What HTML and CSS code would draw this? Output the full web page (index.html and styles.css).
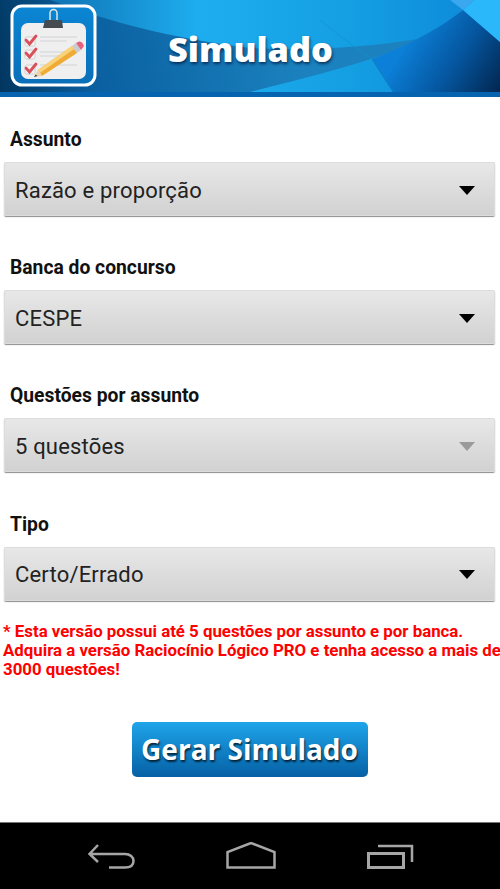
FILE: index.html
```html
<!DOCTYPE html>
<html lang="pt">
<head>
<meta charset="utf-8">
<title>Simulado</title>
<link rel="stylesheet" href="styles.css">
</head>
<body>
<div class="screen">
  <header class="header">
    <svg class="header-bg" width="500" height="97" viewBox="0 0 500 97" aria-hidden="true">
      <defs>
        <linearGradient id="base" x1="0" y1="0" x2="1" y2="0">
          <stop offset="0" stop-color="#0a5f9f"/>
          <stop offset=".4" stop-color="#1eaef0"/>
          <stop offset=".7" stop-color="#149fe2"/>
          <stop offset="1" stop-color="#0d86d8"/>
        </linearGradient>
        <linearGradient id="left" gradientUnits="userSpaceOnUse" x1="0" y1="90" x2="300" y2="40">
          <stop offset="0" stop-color="#02365f"/>
          <stop offset=".3" stop-color="#0a5f9f"/>
          <stop offset="1" stop-color="#1b82bf"/>
        </linearGradient>
        <linearGradient id="right" gradientUnits="userSpaceOnUse" x1="410" y1="35" x2="500" y2="92">
          <stop offset="0" stop-color="#0c80d8"/>
          <stop offset=".5" stop-color="#05569f"/>
          <stop offset="1" stop-color="#02264f"/>
        </linearGradient>
      </defs>
      <rect width="500" height="92" fill="url(#base)"/>
      <path d="M0 0H50C110 22 170 38 250 48C310 51 370 47 417 39C395 55 330 72 250 92H0Z" fill="url(#left)"/>
      <path d="M372 59C390 52 404 46 417 39C435 30 450 20 463 10L500 42V92H393Z" fill="url(#right)"/>
      <path d="M372 59L393 92" stroke="#0f7fc0" stroke-width="1" fill="none"/>
      <path d="M320 20C340 36 358 50 372 59" stroke="#128fd2" stroke-width=".7" fill="none"/>
      <path d="M463 10L474 0H500V42Z" fill="#2ab8fb"/>
      <path d="M450 0L463 10L474 0Z" fill="#3aa7ee"/>
      <rect y="92" width="500" height="5" fill="#0663b0"/>
    </svg>
    <div class="logo">
      <svg width="87" height="83" viewBox="0 0 87 83" aria-hidden="true">
        <defs>
          <linearGradient id="tile" x1="0" y1="0" x2="0" y2="1">
            <stop offset="0" stop-color="#0b86d4"/>
            <stop offset="1" stop-color="#0a6fb8"/>
          </linearGradient>
        </defs>
        <rect x="2" y="2" width="83" height="79" rx="10" fill="url(#tile)" stroke="#fff" stroke-width="3"/>
        <rect x="11" y="19" width="65" height="56" rx="7" fill="#efefef"/>
        <path d="M40 17V9a3.500 3.500 0 0 1 7 0V17" fill="none" stroke="#dfe6ea" stroke-width="1.500"/>
        <path d="M35 16H52L53 24H33Z" fill="#454b50"/>
        <g stroke="#cfd3d6" stroke-width="1.200">
          <path d="M30 33H67M30 37H57M30 48H67M30 52H50M30 61H67M30 65H42"/>
        </g>
        <g fill="#f4f4f4" stroke="#c8c8c8" stroke-width=".8">
          <rect x="15" y="33" width="10" height="9" rx="1.500"/>
          <rect x="15" y="46" width="10" height="9" rx="1.500"/>
          <rect x="15" y="61" width="10" height="9" rx="1.500"/>
        </g>
        <g fill="none" stroke="#d8505a" stroke-width="2.800" stroke-linecap="round">
          <path d="M16 36L19.500 40L26 32"/>
          <path d="M16 49L19.500 53L26 45"/>
          <path d="M16 64L19.500 68L26 60"/>
        </g>
        <path d="M28 66L62 42L67 49L32 72Z" fill="#f0ab35"/>
        <path d="M28 66L62 42L64 45L30 69Z" fill="#f9d27a"/>
        <path d="M24 73L28 66L32 72Z" fill="#e8d2b0"/>
        <path d="M24 73L25.500 70.500L27.500 72Z" fill="#444"/>
        <path d="M62 42L66 39L71 46L67 49Z" fill="#c9ccce"/>
        <path d="M66 39L69 37.500Q72 37 73 40L74 42L71 46Z" fill="#e8627f"/>
      </svg>
    </div>
    <h1 class="title">Simulado</h1>
  </header>

  <main class="form">
    <section class="field">
      <label class="field-label">Assunto</label>
      <div class="spinner"><span>Razão e proporção</span><i class="arrow"></i></div>
    </section>
    <section class="field">
      <label class="field-label">Banca do concurso</label>
      <div class="spinner"><span>CESPE</span><i class="arrow"></i></div>
    </section>
    <section class="field">
      <label class="field-label">Questões por assunto</label>
      <div class="spinner"><span>5 questões</span><i class="arrow arrow-disabled"></i></div>
    </section>
    <section class="field">
      <label class="field-label">Tipo</label>
      <div class="spinner"><span>Certo/Errado</span><i class="arrow"></i></div>
    </section>
    <p class="note">* Esta versão possui até 5 questões por assunto e por banca. Adquira a versão Raciocínio Lógico PRO e tenha acesso a mais de 3000 questões!</p>
    <div class="actions"><button class="generate" type="button">Gerar Simulado</button></div>
  </main>

  <nav class="navbar">
    <svg width="48" height="28" viewBox="0 -2 48 28" aria-hidden="true">
      <path d="M10 1L1.500 10L10 18M2 10H37C42 10 45.500 13 45.500 17C45.500 21.500 42 23.500 37 23.500H21" fill="none" stroke="#a6a6a6" stroke-width="2.500"/>
    </svg>
    <svg width="50" height="28" viewBox="0 -2 50 28" aria-hidden="true">
      <path d="M1.500 23.500V8L25 -1L48.500 8V23.500Z" fill="none" stroke="#a6a6a6" stroke-width="2.500"/>
    </svg>
    <svg width="48" height="28" viewBox="0 -2 48 28" aria-hidden="true">
      <path d="M2.500 9.500H37.500V23.500H2.500Z" fill="none" stroke="#a6a6a6" stroke-width="3"/>
      <path d="M12 2H46V18" fill="none" stroke="#a6a6a6" stroke-width="2.500"/>
    </svg>
  </nav>
</div>
</body>
</html>
```
FILE: styles.css
```css
* { box-sizing: border-box; }
html, body { margin: 0; padding: 0; }
body { background: #fff; font-family: Roboto, "Liberation Sans", sans-serif; }
.screen { width: 500px; height: 889px; display: flex; flex-direction: column; overflow: hidden; }
.header { position: relative; height: 97px; flex: none; display: flex; padding: 4px 0 0 10px; }
.header-bg { position: absolute; left: 0; top: 0; }
.logo { position: relative; width: 87px; height: 83px; }
.logo svg { display: block; }
.title {
  position: relative; margin: 0 0 0 71px; font-family: "Open Sans", sans-serif; font-weight: 800;
  font-size: 34.400px; line-height: 90px; color: #fff; text-shadow: 1px 2px 3px rgba(0, 30, 70, .75);
}
.form { flex: 1; min-height: 0; display: flex; flex-direction: column; padding: 30px 5px 0 4px; }
.field { display: flex; flex-direction: column; }
.field + .field { margin-top: 39.200px; }
.field-label { font-weight: 700; font-size: 19.300px; line-height: 26px; padding-left: 6px; color: #111; height: 35px; }
.spinner {
  height: 54px; display: flex; align-items: center; justify-content: space-between; padding: 2px 20px 0 11px;
  font-size: 22px; letter-spacing: .18px; color: #222; border-radius: 2px;
  background: linear-gradient(#e8e8e8, #d1d1d1);
  box-shadow: inset 0 0 0 1px #dcdcdc, 0 1px 1px #8d8d8d;
}
.arrow { width: 0; height: 0; border-style: solid; border-width: 9px 8.500px 0; border-color: #000 transparent transparent; }
.arrow-disabled { border-top-color: #9a9a9a; }
.note { margin: 21px 0 0 -1px; width: 501px; font-weight: 700; font-size: 16.830px; line-height: 19px; color: #f00; }
.actions { display: flex; justify-content: center; margin-top: 43px; }
.generate {
  width: 236px; height: 55px; padding: 0; border: 0; border-radius: 5px;
  background: linear-gradient(#1fa5ea, #0560a5);
  font-family: "Open Sans", sans-serif; font-weight: 700; font-size: 28px; color: #fff;
  text-shadow: 1px 2px 2px rgba(0, 0, 0, .7);
}
.navbar {
  height: 67px; flex: none; background: #000; border-top: 1px solid #777;
  display: flex; justify-content: space-between; align-items: flex-start; padding: 19px 86px 0 88px;
}
```
